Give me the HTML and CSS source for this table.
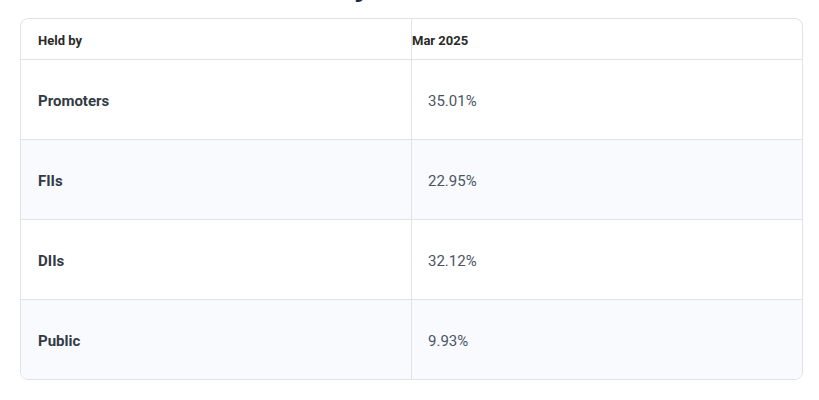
FILE: index.html
```html
<!DOCTYPE html>
<html>
<head>
<meta charset="utf-8">
<link rel="stylesheet" href="styles.css">
</head>
<body>
<h2 class="title">Shareholder Summary</h2>
<div class="card">
  <div class="row head">
    <div class="cell label">Held by</div>
    <div class="cell value">Mar 2025</div>
  </div>
  <div class="row">
    <div class="cell label">Promoters</div>
    <div class="cell value">35.01%</div>
  </div>
  <div class="row alt">
    <div class="cell label">FIIs</div>
    <div class="cell value">22.95%</div>
  </div>
  <div class="row">
    <div class="cell label">DIIs</div>
    <div class="cell value">32.12%</div>
  </div>
  <div class="row alt last">
    <div class="cell label">Public</div>
    <div class="cell value">9.93%</div>
  </div>
</div>
</body>
</html>
```
FILE: styles.css
```css
html, body {
  margin: 0;
  padding: 0;
  background: #ffffff;
  font-family: Roboto, "Liberation Sans", sans-serif;
}
.title {
  margin: -34px 0 0 20px;
  height: 35px;
  font-size: 35px;
  line-height: 35px;
  font-weight: 700;
  color: #1e2a44;
  white-space: nowrap;
}
.card {
  margin: 17px 0 0 20px;
  width: 781px;
  border: 1px solid #e1e1ea;
  border-radius: 8px;
  overflow: hidden;
}
.row {
  display: grid;
  grid-template-columns: 391px 1fr;
  height: 79px;
  border-bottom: 1px solid #e1e1ea;
}
.row.last {
  border-bottom: none;
}
.row.alt {
  background: #f9fafe;
}
.row.head {
  height: 40px;
}
.cell {
  display: flex;
  align-items: center;
  padding-top: 2px;
}
.cell.label {
  padding-left: 17px;
  border-right: 1px solid #e1e1ea;
  font-size: 15px;
  font-weight: 700;
  color: #333a45;
}
.cell.value {
  padding-left: 16px;
  font-size: 15px;
  color: #4b5563;
}
.head .cell.label {
  font-size: 13px;
  color: #2a2a2a;
}
.head .cell.value {
  padding-left: 0;
  font-size: 13px;
  font-weight: 700;
  color: #2a2a2a;
}
```
